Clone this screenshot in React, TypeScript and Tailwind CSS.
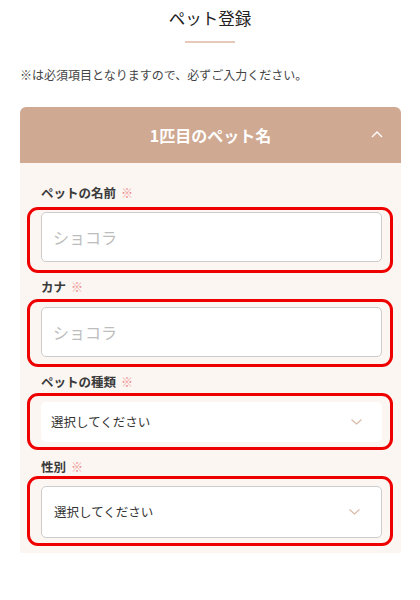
import React from "react";

const font = { fontFamily: '"Noto Sans CJK JP", "Noto Sans", sans-serif' };

function ChevronDown() {
  return (
    <svg width="11" height="6" viewBox="0 0 11 6" fill="none">
      <path d="M0.5 0.5 L5.5 5 L10.5 0.5" stroke="#d8b8a6" strokeWidth="1.1" />
    </svg>
  );
}

function ChevronUp() {
  return (
    <svg width="12" height="7" viewBox="0 0 12 7" fill="none">
      <path d="M1 6 L6 1 L11 6" stroke="#ffffff" strokeWidth="1.4" />
    </svg>
  );
}

function Label({ text }: { text: string }) {
  return (
    <div className="flex items-center h-[16px] text-[12.5px] leading-[16px] font-bold text-[#3a3a3a]">
      <span>{text}</span>
      <span className="ml-[5px] text-[#ef8a8a] font-normal text-[12px]">※</span>
    </div>
  );
}

export default function App() {
  return (
    <div className="w-[420px] h-[600px] bg-white" style={font}>
      <div className="pt-[6px] flex flex-col items-center">
        <div className="text-[16.5px] leading-[24px] font-normal text-[#222]">ペット登録</div>
        <div className="mt-[11px] w-[50px] h-[2px] bg-[#e6c9b8]" />
      </div>
      <div className="mt-[23px] pl-[20px] text-[12px] leading-[18px] text-[#444]">
        ※は必須項目となりますので、必ずご入力ください。
      </div>
      <div className="mt-[23px] ml-[20px] w-[381px]">
        <div className="h-[56px] bg-[#cfa992] rounded-t-[6px] relative flex items-center justify-center">
          <span className="text-white font-bold text-[16px] leading-[24px]">1匹目のペット名</span>
          <span className="absolute right-[18px] top-[24px] flex">
            <ChevronUp />
          </span>
        </div>
        <div className="bg-[#fbf6f2] pt-[22px] pb-[15px] pl-[21px] pr-[19px]">
          <Label text="ペットの名前" />
          <div className="relative mt-[11px]">
            <div className="h-[50px] bg-white border-[1.5px] border-[#cccccc] rounded-[5px] flex items-center pl-[11px] text-[16px] text-[#bdbdbd]">
              ショコラ
            </div>
            <div className="absolute left-[-14px] right-[-11px] top-[-5px] bottom-[-11px] border-[3px] border-[#ee0000] rounded-[11px]" />
          </div>

          <div className="mt-[17px]">
            <Label text="カナ" />
          </div>
          <div className="relative mt-[12px]">
            <div className="h-[50px] bg-white border-[1.5px] border-[#cccccc] rounded-[5px] flex items-center pl-[11px] text-[16px] text-[#bdbdbd]">
              ショコラ
            </div>
            <div className="absolute left-[-14px] right-[-11px] top-[-8px] bottom-[-10px] border-[3px] border-[#ee0000] rounded-[11px]" />
          </div>

          <div className="mt-[17px]">
            <Label text="ペットの種類" />
          </div>
          <div className="relative mt-[12px]">
            <div className="h-[40px] bg-white rounded-[5px] flex items-center justify-between pl-[10px] pr-[20px] text-[12.5px] text-[#333]">
              <span>選択してください</span>
              <ChevronDown />
            </div>
            <div className="absolute left-[-14px] right-[-11px] top-[-9px] bottom-[-8px] border-[3px] border-[#ee0000] rounded-[11px]" />
          </div>

          <div className="mt-[17px]">
            <Label text="性別" />
          </div>
          <div className="relative mt-[11px]">
            <div className="h-[52px] bg-white border-[1.5px] border-[#cccccc] rounded-[5px] flex items-center justify-between pl-[12px] pr-[21px] text-[12.5px] text-[#333]">
              <span>選択してください</span>
              <ChevronDown />
            </div>
            <div className="absolute left-[-14px] right-[-11px] top-[-10px] bottom-[-8px] border-[3px] border-[#ee0000] rounded-[11px]" />
          </div>
        </div>
      </div>
    </div>
  );
}
